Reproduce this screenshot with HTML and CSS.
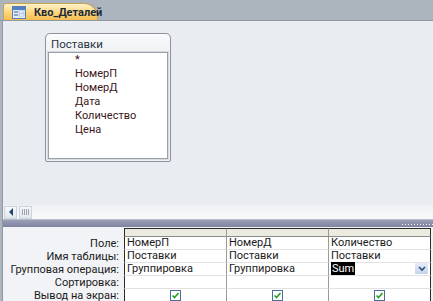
FILE: index.html
```html
<!DOCTYPE html>
<html>
<head>
  <title>Кво_Деталей</title>
  <link rel="stylesheet" href="styles.css">
</head>
<body>
  <div class="tabbar">
    <div class="tab">
      <svg class="tab-icon" width="14" height="13" viewBox="0 0 14 13">
        <rect x="0.5" y="0.5" width="13" height="12" fill="#e8eef6" stroke="#5a7db0"/>
        <rect x="1" y="1" width="12" height="3" fill="#4f81c7"/>
        <rect x="2" y="5" width="4" height="2" fill="#8aa6cc"/>
        <rect x="7" y="5" width="5" height="2" fill="#ffffff" stroke="#7f9cc4" stroke-width="0.5"/>
        <rect x="2" y="8" width="4" height="2" fill="#8aa6cc"/>
        <rect x="7" y="8" width="5" height="2" fill="#ffffff" stroke="#7f9cc4" stroke-width="0.5"/>
      </svg>
      <span>Кво_Деталей</span>
    </div>
  </div>

  <div class="doc">
    <div class="upper">
      <div class="field-list">
        <div class="field-list-title">Поставки</div>
        <ul class="fields">
          <li>*</li>
          <li>НомерП</li>
          <li>НомерД</li>
          <li>Дата</li>
          <li>Количество</li>
          <li>Цена</li>
        </ul>
      </div>
    </div>

    <div class="hscroll">
      <div class="sb-btn">
        <svg width="6" height="8" viewBox="0 0 6 8"><path d="M5 0 L5 8 L1 4 Z" fill="#26456e"/></svg>
      </div>
      <div class="sb-thumb">
        <svg width="7" height="6" viewBox="0 0 7 6">
          <path d="M0.5 0V6M2.5 0V6M4.5 0V6M6.5 0V6" stroke="#9aa3b0" stroke-width="1"/>
        </svg>
      </div>
    </div>

    <div class="splitter"><span class="grip"></span></div>

    <div class="lower">
      <table class="qbe">
        <tr class="selector">
          <th class="label"></th>
          <td></td><td></td><td></td>
        </tr>
        <tr>
          <th class="label">Поле:</th>
          <td>НомерП</td><td>НомерД</td><td>Количество</td>
        </tr>
        <tr>
          <th class="label">Имя таблицы:</th>
          <td>Поставки</td><td>Поставки</td><td>Поставки</td>
        </tr>
        <tr>
          <th class="label">Групповая операция:</th>
          <td>Группировка</td><td>Группировка</td>
          <td class="combo"><span class="sel">Sum</span><span class="drop">
            <svg width="8" height="6" viewBox="0 0 8 6"><path d="M1 1 L4 4 L7 1" fill="none" stroke="#2d4f80" stroke-width="1.6"/></svg>
          </span></td>
        </tr>
        <tr>
          <th class="label">Сортировка:</th>
          <td></td><td></td><td></td>
        </tr>
        <tr>
          <th class="label">Вывод на экран:</th>
          <td class="check"><span class="box"></span></td>
          <td class="check"><span class="box"></span></td>
          <td class="check"><span class="box"></span></td>
        </tr>
      </table>
    </div>
  </div>
</body>
</html>
```

FILE: styles.css
```css
body {
  margin: 0;
  font-family: Roboto, "Noto Sans", sans-serif;
  font-size: 11px;
  color: #1a1a1a;
  background: #adb5bf;
  width: 433px;
  height: 301px;
  overflow: hidden;
}
.tabbar {
  height: 21px;
  background: #acb4be;
  border-bottom: 1px solid #8f98a3;
  display: flex;
  align-items: flex-end;
  padding-left: 3px;
  box-sizing: border-box;
}
.tab {
  height: 17px;
  width: 95px;
  display: flex;
  align-items: center;
  gap: 8px;
  padding-left: 8px;
  box-sizing: border-box;
  background: linear-gradient(#fff3c8, #fbd57c 55%, #f7bd4f);
  border: 1px solid #c9a25a;
  border-bottom: none;
  border-radius: 3px 14px 0 0;
  font-weight: bold;
  color: #1d2a3a;
}
.tab-icon {
  flex: none;
}
.doc {
  margin-left: 2px;
  border-left: 1px solid #8e97a2;
  background: #e9edf1;
  height: 280px;
  display: flex;
  flex-direction: column;
}
.upper {
  height: 184px;
  flex: none;
  padding: 12px 0 0 42px;
  box-sizing: border-box;
}
.field-list {
  width: 126px;
  height: 129px;
  border: 1px solid #8d939c;
  border-radius: 5px 5px 2px 2px;
  background: linear-gradient(#fafbfc, #eef0f3 20px);
  padding: 0 2px 2px 2px;
  box-sizing: border-box;
  display: flex;
  flex-direction: column;
}
.field-list-title {
  height: 18px;
  line-height: 20px;
  padding-left: 3px;
  font-size: 11.5px;
  color: #2b3443;
}
.fields {
  flex: 1;
  list-style: none;
  margin: 0;
  padding: 0 0 0 26px;
  background: #fff;
  border: 1px solid #9aa0a8;
  box-shadow: 0 0 0 1px #d8dce1;
  line-height: 14px;
  color: #3b1616;
}
.hscroll {
  height: 14px;
  flex: none;
  background: linear-gradient(#eef1f4, #f8f9fb);
  display: flex;
  align-items: center;
  gap: 2px;
  padding-left: 1px;
}
.sb-btn,
.sb-thumb {
  width: 13px;
  height: 13px;
  border: 1px solid #cdd3db;
  background: linear-gradient(#f7f8fa, #e4e8ed);
  box-sizing: border-box;
  display: flex;
  align-items: center;
  justify-content: center;
}
.splitter {
  height: 8px;
  flex: none;
  border-top: 1px solid #b9bdcc;
  background: linear-gradient(#9c9fb7, #7f83a0);
  box-sizing: border-box;
  display: flex;
  justify-content: flex-end;
  align-items: flex-end;
}
.grip {
  width: 32px;
  height: 3px;
  margin-bottom: 1px;
  background-image: radial-gradient(circle, #f4f4f8 0.8px, transparent 1px);
  background-size: 3px 3px;
}
.lower {
  flex: 1;
  background: #f1f3f6;
  padding-top: 1px;
}
.qbe {
  border-collapse: separate;
  border-spacing: 0;
  table-layout: fixed;
  font-size: 11px;
}
.qbe th.label {
  width: 116px;
  padding: 0 5px 0 0;
  text-align: right;
  font-weight: normal;
  color: #1a1a1a;
  height: 13px;
  line-height: 13px;
  white-space: nowrap;
}
.qbe td {
  width: 97px;
  height: 12px;
  line-height: 12px;
  padding: 0 2px;
  background: #fff;
  border-left: 1px solid #9a9a9a;
  border-bottom: 1px solid #e2e2e2;
  white-space: nowrap;
}
.qbe td:last-child {
  border-right: 1px solid #2a2a2a;
}
.qbe td:nth-child(2) {
  border-left: 1px solid #2a2a2a;
}
.qbe .selector td {
  height: 7px;
  line-height: 7px;
  background: #ecebdf;
  border-top: 1px solid #2a2a2a;
  border-bottom: 1px solid #8a8a8a;
}
.qbe .selector th {
  height: 9px;
  line-height: 9px;
}
.combo {
  position: relative;
}
.sel {
  background: #000;
  color: #fff;
  padding: 0 1px;
}
.drop {
  position: absolute;
  right: 2px;
  top: 0;
  width: 13px;
  height: 11px;
  background: linear-gradient(#e6eefa, #c4d4ea);
  display: flex;
  align-items: center;
  justify-content: center;
}
.check {
  text-align: center;
}
.box {
  display: inline-block;
  width: 11px;
  height: 11px;
  margin-top: 1px;
  vertical-align: top;
  box-sizing: border-box;
  border: 1px solid #4a6d9a;
  background: #fff url("data:image/svg+xml;utf8,<svg xmlns='http://www.w3.org/2000/svg' width='9' height='9'><path d='M1.5 4.5 L3.5 6.5 L7.5 2' fill='none' stroke='%2321a121' stroke-width='1.6'/></svg>") center no-repeat;
}
```
